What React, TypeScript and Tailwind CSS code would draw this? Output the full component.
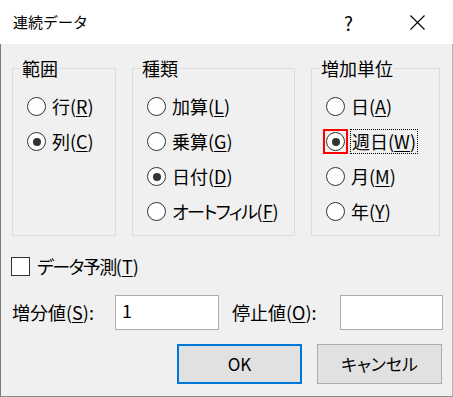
import React from 'react';

const FONT = '"Noto Sans CJK JP", "Noto Sans", sans-serif';

interface RadioProps {
  text: string;
  accel: string;
  checked?: boolean;
  focused?: boolean;
  tight?: boolean;
}

const Accel: React.FC<{ text: string; accel: string; tight?: boolean }> = ({ text, accel, tight }) => (
  <>
    <span className={tight ? 'tracking-[-1.5px]' : ''}>{text}</span>(<u className="underline-offset-[2px]">{accel}</u>)
  </>
);

const Radio: React.FC<RadioProps> = ({ text, accel, checked = false, focused = false, tight }) => (
  <div className="flex h-[35px] items-center whitespace-nowrap">
    <div className="relative ml-[14px] flex h-[19px] w-[19px] shrink-0 items-center justify-center rounded-full border border-[#333333] bg-white">
      {checked && <div className="h-[8px] w-[8px] rounded-full bg-[#333333]" />}
      {focused && (
        <div className="absolute left-[-4px] top-[-4px] h-[25px] w-[25px] border-2 border-[#ff0000]" />
      )}
    </div>
    {focused ? (
      <span className="ml-[5px] border border-dotted border-black px-[1px] leading-[23px]">
        <Accel text={text} accel={accel} />
      </span>
    ) : (
      <span className="ml-[6px] leading-[23px]">
        <Accel text={text} accel={accel} tight={tight} />
      </span>
    )}
  </div>
);

const GroupBox: React.FC<{ title: string; width: string; children: React.ReactNode }> = ({
  title,
  width,
  children,
}) => (
  <div className={`relative h-[168px] border border-[#dcdcdc] pt-[20px] ${width}`}>
    <span className="absolute left-[7px] top-[-12px] bg-[#f0f0f0] px-[2px] leading-[22px]">{title}</span>
    {children}
  </div>
);

export default function App() {
  return (
    <div
      className="h-[397px] w-[453px] text-[18px] text-black [font-feature-settings:'palt']"
      style={{ fontFamily: FONT }}
    >
      {/* title bar */}
      <div className="flex h-[44px] items-center bg-white [font-feature-settings:normal]">
        <span className="ml-[13px] text-[15px]">連続データ</span>
        <span className="ml-auto text-[19px] leading-none">?</span>
        <svg className="ml-[57px] mr-[28px]" width="15" height="15" viewBox="0 0 15 15">
          <path d="M0.5 0.5 L14.5 14.5 M14.5 0.5 L0.5 14.5" stroke="#000" strokeWidth="1.1" />
        </svg>
      </div>

      <div className="h-[353px] border-x border-b border-l-[#7a7a7a] border-r-[#b4b4b4] border-b-[#8a8a8a] bg-[#f0f0f0]">
        <div className="ml-[11px] flex gap-[17px] pt-[24px]">
          <GroupBox title="範囲" width="w-[104px]">
            <Radio text="行" accel="R" />
            <Radio text="列" accel="C" checked />
          </GroupBox>
          <div className="-ml-[1px]">
            <GroupBox title="種類" width="w-[163px]">
              <Radio text="加算" accel="L" />
              <Radio text="乗算" accel="G" />
              <Radio text="日付" accel="D" checked />
              <Radio text="オートフィル" accel="F" tight />
            </GroupBox>
          </div>
          <div className="-ml-[1px]">
            <GroupBox title="増加単位" width="w-[129px]">
              <Radio text="日" accel="A" />
              <Radio text="週日" accel="W" checked focused />
              <Radio text="月" accel="M" />
              <Radio text="年" accel="Y" />
            </GroupBox>
          </div>
        </div>

        <div className="ml-[10px] mt-[18px] flex h-[24px] items-center">
          <div className="h-[19px] w-[19px] border border-[#333333] bg-white" />
          <span className="ml-[7px]">
            <Accel text="データ予測" accel="T" tight />
          </span>
        </div>

        <div className="ml-[11px] mt-[17px] flex h-[35px] items-center whitespace-nowrap">
          <span className="w-[103px]">
            <Accel text="増分値" accel="S" />:
          </span>
          <div className="h-[35px] w-[104px] border border-[#adadad] bg-white pl-[6px] pt-[3px] leading-[22px]">1</div>
          <span className="ml-[13px] w-[108px]">
            <Accel text="停止値" accel="O" />:
          </span>
          <div className="h-[35px] w-[103px] border border-[#adadad] bg-white" />
        </div>

        <div className="mr-[10px] mt-[14px] flex justify-end gap-[15px] text-[17px]">
          <button className="flex h-[40px] w-[125px] items-center justify-center border-2 border-[#0078d7] bg-[#e1e1e1]">
            OK
          </button>
          <button className="flex h-[40px] w-[125px] items-center justify-center border border-[#adadad] bg-[#e1e1e1]">
            キャンセル
          </button>
        </div>
      </div>
    </div>
  );
}
